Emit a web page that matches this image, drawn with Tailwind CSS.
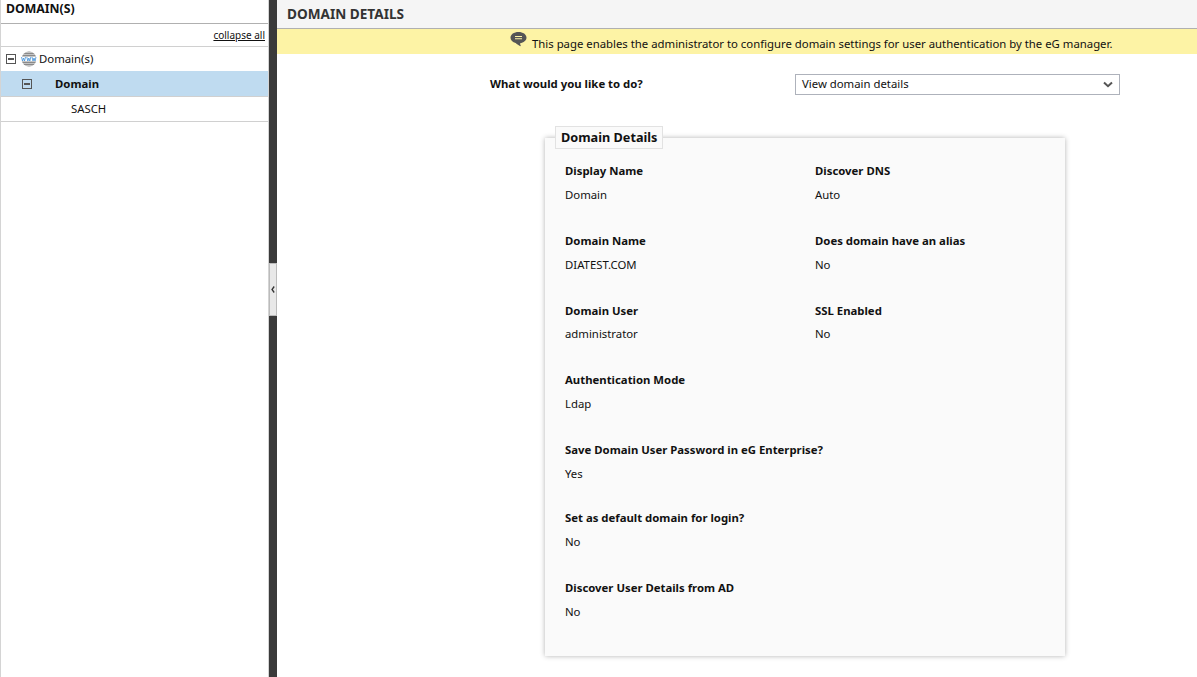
<!DOCTYPE html>
<html lang="en">
<head>
  <meta charset="UTF-8">
  <title>Domain Details</title>
  <script src="https://cdn.jsdelivr.net/npm/@tailwindcss/browser@4"></script>
</head>
<body class="h-[677px] overflow-hidden bg-white text-[11.35px] text-[#111] font-['Noto_Sans',sans-serif]">
  <div class="flex h-full">
    <!-- left tree -->
    <div class="w-[269px] shrink-0 border-l border-r border-[#d4d4d4] flex flex-col">
      <div class="h-[24px] border-b border-[#b0b0b0] pl-[5px] font-bold text-[12.3px] leading-[17px] text-[#111]">DOMAIN(S)</div>
      <div class="h-[23px] border-b border-[#d0d0d0] pr-[3px] text-right text-[10px] leading-[23px]"><a class="underline">collapse all</a></div>
      <div class="h-[24px] flex items-center pl-[5px]">
        <span class="w-[10px] h-[10px] border border-[#555] flex items-center justify-center"><span class="w-[6px] h-[2px] bg-[#555]"></span></span>
        <svg class="ml-[5px]" width="16" height="16" viewBox="0 0 16 16">
          <circle cx="8" cy="8" r="7.500" fill="#8a8a8a"/>
          <path d="M4 1.500h8M2 3.500h12M2 12.500h12M4 14.500h8" stroke="#ddd" stroke-width="0.700"/>
          <rect x="0" y="5.500" width="16" height="5" fill="#fff"/>
          <path d="M0.500 6l1 4 1-3 1 3 1-4M5.800 6l1 4 1-3 1 3 1-4M11 6l1 4 1-3 1 3 1-4" fill="none" stroke="#3f8fd8" stroke-width="0.800"/>
        </svg>
        <span class="ml-[2px]">Domain(s)</span>
      </div>
      <div class="h-[26px] flex items-center bg-[#bfdbf0] border-b border-[#d0d0d0] pl-[21px]">
        <span class="w-[10px] h-[10px] border border-[#555] flex items-center justify-center"><span class="w-[6px] h-[2px] bg-[#555]"></span></span>
        <span class="ml-[23px] font-bold">Domain</span>
      </div>
      <div class="h-[25px] flex items-center border-b border-[#d0d0d0] pl-[70px]">SASCH</div>
    </div>

    <!-- splitter -->
    <div class="relative w-[8px] shrink-0 bg-[#3a3a3a]">
      <div class="absolute left-0 top-[263px] w-[8px] h-[53px] bg-[#e8e8e8] border border-[#bbb] flex items-center justify-center">
        <svg width="4" height="7" viewBox="0 0 4 7"><path d="M3.200 0.500 1 3.500l2.200 3" fill="none" stroke="#333" stroke-width="1.300"/></svg>
      </div>
    </div>

    <!-- main -->
    <div class="flex-1 min-w-0">
      <div class="h-[29px] bg-[#f5f5f5] border-b border-[#b0b0b0] pl-[10px] text-[13.6px] leading-[28px] text-[#333] font-bold">DOMAIN DETAILS</div>
      <div class="h-[25px] bg-[#fdf3a5] flex items-center pl-[233px]">
        <svg class="mb-[4px]" width="17" height="17" viewBox="0 0 17 17">
          <path d="M8.500 1C4 1 .5 3.400.5 6.700c0 2.600 2.200 4.600 5.200 5.300 1.200 1.200 3.200 2.700 5.300 3.300-.6-1-.9-2-.9-3C13.600 11.600 16.500 9.500 16.500 6.700 16.500 3.400 13 1 8.500 1z" fill="#555"/>
          <path d="M5 5.500h7M5 7.800h7" stroke="#fdf3a5" stroke-width="1.100"/>
        </svg>
        <span class="ml-[5px] mt-[5px]">This page enables the administrator to configure domain settings for user authentication by the eG manager.</span>
      </div>
      <div class="flex items-center mt-[20px] h-[21px] pl-[213px]">
        <span class="w-[305px] font-bold mb-[2px]">What would you like to do?</span>
        <div class="w-[325px] h-[21px] border border-[#aeb2bb] pl-[6px] pr-[6px] flex items-center justify-between">
          <span class="mb-[2px]">View domain details</span>
          <svg width="10" height="7" viewBox="0 0 10 7"><path d="M1 1.500 5 5.200 9 1.500" fill="none" stroke="#555" stroke-width="2"/></svg>
        </div>
      </div>
      <div class="relative ml-[268px] mt-[43px] w-[520px] h-[518px] bg-[#fafafa] shadow-[0_0_5px_rgba(0,0,0,0.3)] pl-[20px] pt-[25px]">
        <div class="absolute left-[10px] top-[-12px] h-[23px] px-[5px] bg-[#fafafa] border border-[#e2e2e2] text-[12.7px] font-bold leading-[21px]">Domain Details</div>
        <div class="grid grid-cols-[250px_1fr]">
          <div class="h-[70px]"><div class="font-bold leading-[16px]">Display Name</div><div class="mt-[8px] leading-[16px]">Domain</div></div>
          <div class="h-[70px]"><div class="font-bold leading-[16px]">Discover DNS</div><div class="mt-[8px] leading-[16px]">Auto</div></div>
          <div class="h-[70px]"><div class="font-bold leading-[16px]">Domain Name</div><div class="mt-[8px] leading-[16px]">DIATEST.COM</div></div>
          <div class="h-[70px]"><div class="font-bold leading-[16px]">Does domain have an alias</div><div class="mt-[8px] leading-[16px]">No</div></div>
          <div class="h-[69px]"><div class="font-bold leading-[16px]">Domain User</div><div class="mt-[7px] leading-[16px]">administrator</div></div>
          <div class="h-[69px]"><div class="font-bold leading-[16px]">SSL Enabled</div><div class="mt-[7px] leading-[16px]">No</div></div>
          <div class="h-[70px] col-span-2"><div class="font-bold leading-[16px]">Authentication Mode</div><div class="mt-[8px] leading-[16px]">Ldap</div></div>
          <div class="h-[68px] col-span-2"><div class="font-bold leading-[16px]">Save Domain User Password in eG Enterprise?</div><div class="mt-[8px] leading-[16px]">Yes</div></div>
          <div class="h-[70px] col-span-2"><div class="font-bold leading-[16px]">Set as default domain for login?</div><div class="mt-[8px] leading-[16px]">No</div></div>
          <div class="h-[70px] col-span-2"><div class="font-bold leading-[16px]">Discover User Details from AD</div><div class="mt-[8px] leading-[16px]">No</div></div>
        </div>
      </div>
    </div>
  </div>
</body>
</html>
